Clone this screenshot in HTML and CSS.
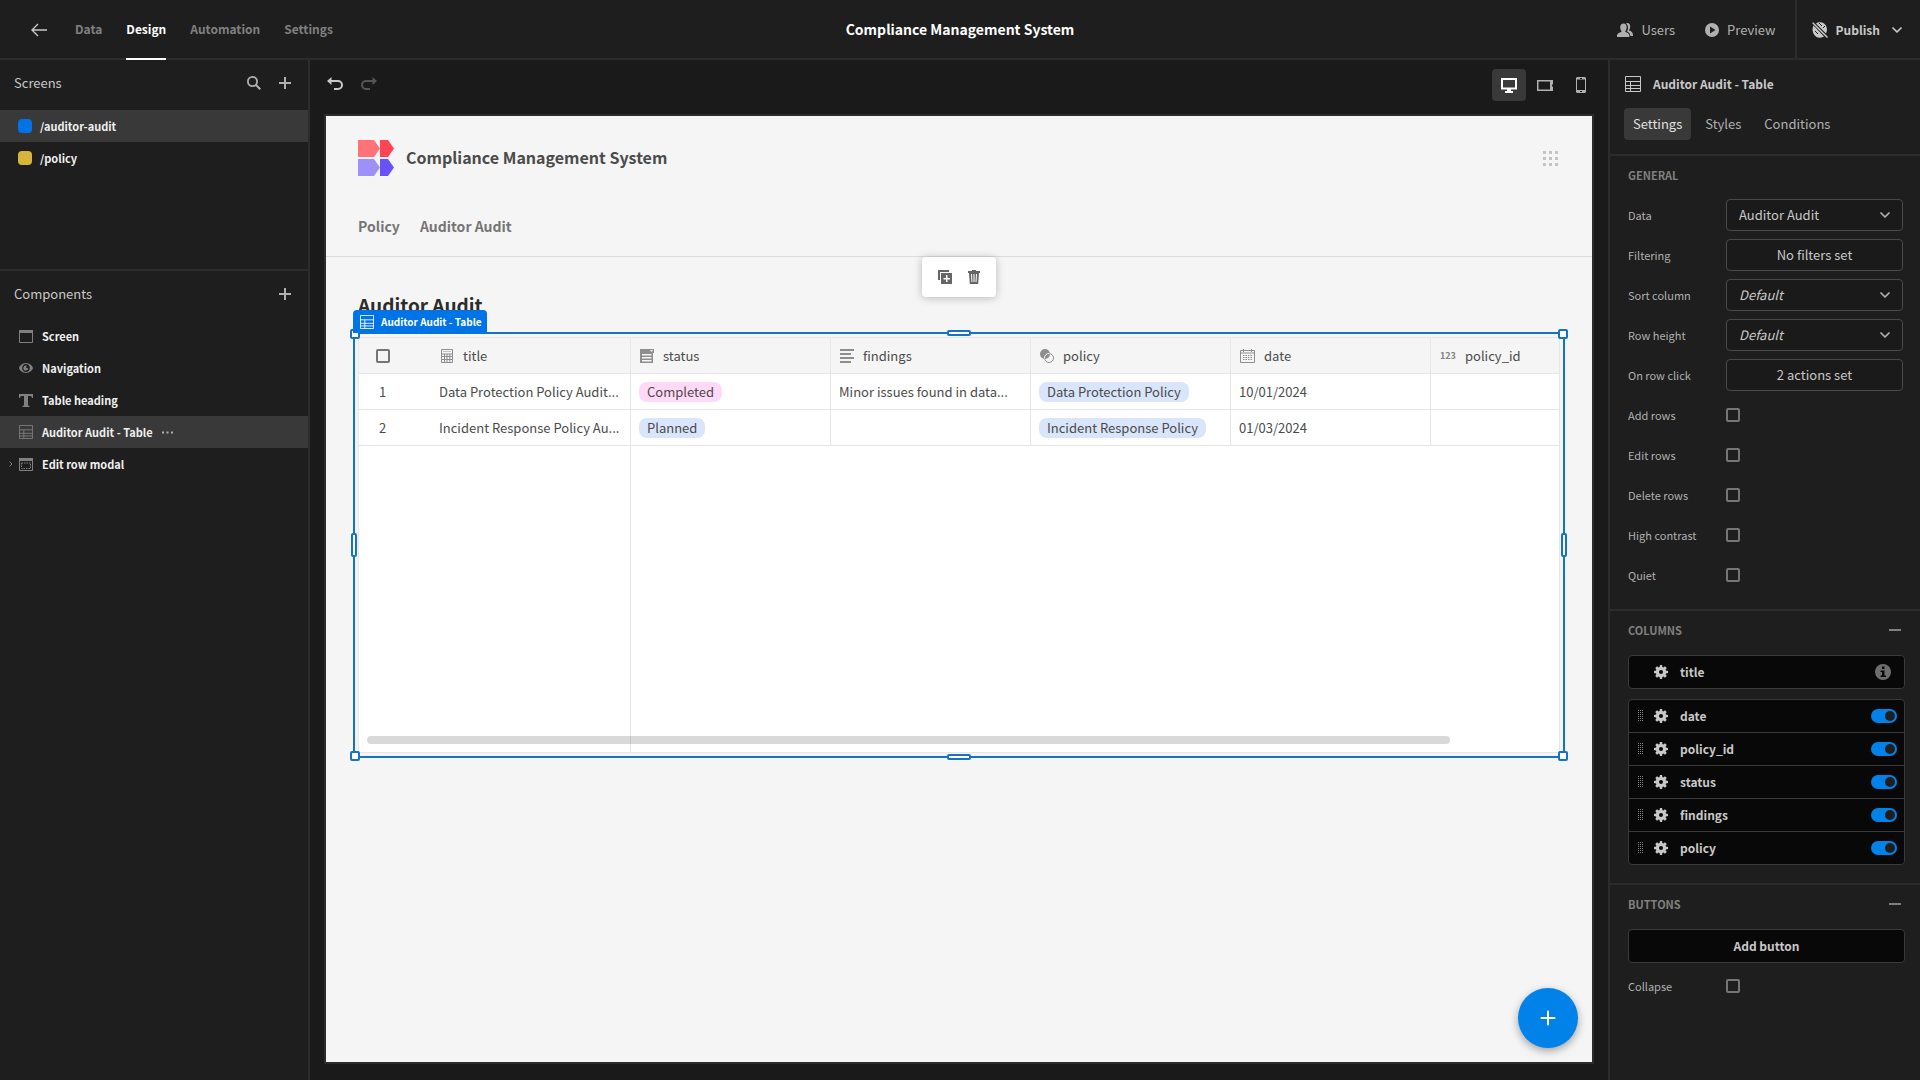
FILE: index.html
```html
<!DOCTYPE html>
<html lang="en">
<head>
    <meta charset="UTF-8">
    <meta name="viewport" content="width=device-width, initial-scale=1.0">
    <title>Compliance Management System</title>
    <link rel="stylesheet" href="styles.css">
</head>
<body>
    <!-- Shared icons -->
    <svg class="sprite" aria-hidden="true">
        <symbol id="i-table" viewBox="0 0 16 16">
            <path d="M.5.5h15v15H.5zM.5 5.5h15M.5 9.5h15M.5 12.5h15M5.5 5.5v10" fill="none" stroke="currentColor"/>
        </symbol>
        <symbol id="i-plus" viewBox="0 0 12 12">
            <path d="M6 0v12M0 6h12" fill="none" stroke="currentColor" stroke-width="2"/>
        </symbol>
        <symbol id="i-chevron" viewBox="0 0 10 6">
            <path d="M1 1l4 4 4-4" fill="none" stroke="currentColor" stroke-width="1.700" stroke-linecap="round" stroke-linejoin="round"/>
        </symbol>
        <symbol id="i-gear" viewBox="0 0 14 14">
            <path fill="currentColor" fill-rule="evenodd" d="M5.900 0h2.200l.3 2 .9.4L11 1.300l1.700 1.700L11.600 4.700l.4.9 2 .3v2.200l-2 .3-.4.9 1.100 1.700-1.700 1.700-1.700-1.100-.9.4-.3 2H5.900l-.3-2-.9-.4L3 12.700 1.300 11l1.100-1.700-.4-.9-2-.3V5.900l2-.3.4-.9L1.300 3 3 1.300l1.700 1.100.9-.4zM7 5a2 2 0 100 4 2 2 0 000-4z"/>
        </symbol>
        <symbol id="i-drag" viewBox="0 0 6 12">
            <path fill="currentColor" d="M0 0h1v1H0zM2 0h1v1H2zM4 0h1v1H4zM0 2h1v1H0zM2 2h1v1H2zM4 2h1v1H4zM0 4h1v1H0zM2 4h1v1H2zM4 4h1v1H4zM0 6h1v1H0zM2 6h1v1H2zM4 6h1v1H4zM0 8h1v1H0zM2 8h1v1H2zM4 8h1v1H4zM0 10h1v1H0zM2 10h1v1H2zM4 10h1v1H4z"/>
        </symbol>
    </svg>

    <header class="topbar">
        <nav class="topbar-nav">
            <a href="#" class="back" aria-label="Back">
                <svg width="16" height="14" viewBox="0 0 16 14"><path d="M7 1L1 7l6 6M1 7h15" fill="none" stroke="currentColor" stroke-width="1.400"/></svg>
            </a>
            <a href="#">Data</a>
            <a href="#" class="active">Design</a>
            <a href="#">Automation</a>
            <a href="#">Settings</a>
        </nav>
        <h1>Compliance Management System</h1>
        <div class="topbar-actions">
            <button class="top-button">
                <svg width="16" height="14" viewBox="0 0 16 14">
                    <path fill="currentColor" d="M6.500.5c2 0 3.200 1.500 3.200 3.700 0 1.500-.6 2.900-1.300 3.700v1c2 .6 4 1.500 4 3.600V14H0v-1.500c0-2.100 2.200-3 4.400-3.600v-1C3.700 7.100 3.200 5.700 3.200 4.200 3.200 2 4.500.5 6.500.5z"/>
                    <path fill="currentColor" d="M9 .4C9.500 0 10 0 10.400 0c1.800 0 2.800 1.500 2.800 3.400 0 1.500-.5 2.600-1.100 3.300v.9c2 .6 3.900 2 3.900 4.400v1h-2.600c-.1-2.600-1.900-3.800-3.500-4.400.7-1 1.100-2.400 1.100-4C11 2.700 10.200 1.200 9 .4z"/>
                </svg>
                Users
            </button>
            <button class="top-button">
                <svg width="14" height="14" viewBox="0 0 14 14"><path fill="currentColor" fill-rule="evenodd" d="M7 0a7 7 0 100 14A7 7 0 007 0zM5 3.500L10.500 7 5 10.500z"/></svg>
                Preview
            </button>
            <button class="top-button publish">
                <svg width="16" height="16" viewBox="0 0 16 16">
                    <path fill="currentColor" d="M4 1.500C6-.3 10-.3 12 1.500c3 2 3.800 6.500 2 10zM1.500 3.500l10.500 11C9 16 6.500 16 4.500 15 .8 12.500-.5 7.500 1.500 3.500z"/>
                    <path d="M.7.7l14.800 14.800" stroke="currentColor" stroke-width="1.500"/>
                    <path d="M7 1l3 3M11 6l2-2M3 9l3 3" stroke="#1e1e1e"/>
                </svg>
                Publish
                <svg class="chevron" width="10" height="6"><use href="#i-chevron"/></svg>
            </button>
        </div>
    </header>

    <div class="builder">
        <aside class="left-panel">
            <section class="screens">
                <div class="panel-title">
                    <h2>Screens</h2>
                    <button aria-label="Search screens">
                        <svg width="14" height="14" viewBox="0 0 14 14"><circle cx="5.500" cy="5.500" r="4.600" fill="none" stroke="currentColor" stroke-width="1.800"/><path d="M9 9l4.300 4.300" stroke="currentColor" stroke-width="2"/></svg>
                    </button>
                    <button aria-label="Add screen"><svg width="12" height="12"><use href="#i-plus"/></svg></button>
                </div>
                <a href="#" class="nav-item selected"><span class="swatch blue"></span>/auditor-audit</a>
                <a href="#" class="nav-item"><span class="swatch yellow"></span>/policy</a>
            </section>

            <section class="components">
                <div class="panel-title">
                    <h2>Components</h2>
                    <button aria-label="Add component"><svg width="12" height="12"><use href="#i-plus"/></svg></button>
                </div>
                <a href="#" class="nav-item">
                    <svg width="14" height="13" viewBox="0 0 14 13"><path d="M.5.5h13v12H.5z" fill="none" stroke="currentColor"/><path d="M0 0h14v3H0z" fill="currentColor"/></svg>
                    Screen
                </a>
                <a href="#" class="nav-item">
                    <svg width="14" height="12" viewBox="0 0 14 12"><path fill="currentColor" fill-rule="evenodd" d="M7 1c4 0 7 3.600 7 5s-3 5-7 5-7-3.600-7-5 3-5 7-5zm0 1C4.500 2 3.200 4 3.200 6S4.500 10 7 10s3.800-2 3.800-4S9.500 2 7 2zm0 1.500c.5 0 .7.100 1 .2-.5.300-.8.700-.8 1.200 0 .8.600 1.300 1.300 1.300.3 0 .6-.1.900-.3v.1A2.500 2.500 0 117 3.500z"/></svg>
                    Navigation
                </a>
                <a href="#" class="nav-item">
                    <svg width="14" height="13" viewBox="0 0 14 13"><path fill="currentColor" d="M0 0h14v4h-1c-.3-1.500-.8-2-2-2H9v8.500c0 1 .3 1.300 1.500 1.500v1h-7v-1C4.700 11.800 5 11.500 5 10.500V2H3C1.800 2 1.300 2.500 1 4H0z"/></svg>
                    Table heading
                </a>
                <a href="#" class="nav-item selected">
                    <svg width="14" height="14"><use href="#i-table"/></svg>
                    Auditor Audit - Table
                    <svg class="more" width="11" height="3" viewBox="0 0 11 3"><path fill="currentColor" d="M0 .5h2v2H0zM4.500.5h2v2h-2zM9 .5h2v2H9z"/></svg>
                </a>
                <a href="#" class="nav-item has-children">
                    <svg class="arrow" width="4" height="6" viewBox="0 0 4 6"><path d="M.5.5L3 3 .5 5.500" fill="none" stroke="currentColor"/></svg>
                    <svg width="14" height="13" viewBox="0 0 14 13"><path d="M.5.5h13v12H.5z" fill="none" stroke="currentColor"/><path d="M0 0h14v3H0z" fill="currentColor"/><path d="M2.500 5h9v5.500h-9z" fill="none" stroke="currentColor" stroke-dasharray="1.500 1"/></svg>
                    Edit row modal
                </a>
            </section>
        </aside>

        <main class="canvas">
            <div class="canvas-toolbar">
                <button class="undo" aria-label="Undo">
                    <svg width="16" height="13" viewBox="0 0 16 13"><path d="M4 4h7a4 4 0 010 8H7" fill="none" stroke="currentColor" stroke-width="2"/><path d="M0 4l4.500-4v8z" fill="currentColor"/></svg>
                </button>
                <button class="redo" aria-label="Redo" disabled>
                    <svg width="16" height="13" viewBox="0 0 16 13"><path d="M12 4H5a4 4 0 000 8h4" fill="none" stroke="currentColor" stroke-width="2"/><path d="M16 4l-4.500-4v8z" fill="currentColor"/></svg>
                </button>
                <div class="devices">
                    <button class="active" aria-label="Desktop">
                        <svg width="16" height="15" viewBox="0 0 16 15"><path d="M1 1h14v9.500H1z" fill="none" stroke="currentColor" stroke-width="2"/><path fill="currentColor" d="M6 11h4v2h2v2H4v-2h2z"/></svg>
                    </button>
                    <button aria-label="Tablet">
                        <svg width="16" height="13" viewBox="0 0 16 13"><path d="M0 1h16v4.500h-1v2h1V12H0zM1.500 2.500v8H13v-8z" fill="currentColor" fill-rule="evenodd"/></svg>
                    </button>
                    <button aria-label="Mobile">
                        <svg width="10" height="16" viewBox="0 0 10 16"><path d="M1 0h8l1 1v14l-1 1H1l-1-1V1zM1 2.500v10.500h8V2.500zM4 1v1h2V1zM4 14v1h2v-1z" fill="currentColor" fill-rule="evenodd"/></svg>
                    </button>
                </div>
            </div>

            <div class="preview">
                <div class="app-header">
                    <svg width="36" height="36" viewBox="0 0 36 36">
                        <path fill="#ff7378" d="M0 0h16l6 8.500L16 17H0z"/>
                        <path fill="#ff4553" d="M22 0h8l6 8.500L30 17h-8z"/>
                        <path fill="#9f8ff9" d="M0 19h16l6 8.500L16 36H0z"/>
                        <path fill="#6a51f5" d="M22 19h8l6 8.500L30 36h-8z"/>
                    </svg>
                    <span class="app-title">Compliance Management System</span>
                    <button class="apps" aria-label="Apps">
                        <svg width="15" height="15" viewBox="0 0 15 15"><path fill="currentColor" d="M0 0h3v3H0zM6 0h3v3H6zM12 0h3v3h-3zM0 6h3v3H0zM6 6h3v3H6zM12 6h3v3h-3zM0 12h3v3H0zM6 12h3v3H6zM12 12h3v3h-3z"/></svg>
                    </button>
                </div>
                <nav class="app-nav">
                    <a href="#">Policy</a>
                    <a href="#">Auditor Audit</a>
                </nav>

                <div class="app-body">
                    <h2>Auditor Audit</h2>
                    <div class="component">
                        <div class="grid-wrap">
                            <table class="grid">
                                <colgroup>
                                    <col class="gutter">
                                    <col><col><col><col><col><col>
                                </colgroup>
                                <thead>
                                    <tr>
                                        <th><input type="checkbox" class="checkbox" aria-label="Select all rows"></th>
                                        <th><span class="th">
                                            <svg width="14" height="14" viewBox="0 0 14 14"><path d="M1.500.5h11v13h-11zM1.500 5h11M1.500 7.500h11M1.500 10.500h11M4.500 5v8.500M7 5v8.500M9.800 5v8.500" fill="none" stroke="currentColor"/><path d="M3 2h8v1H3z" fill="currentColor" opacity=".5"/></svg>
                                            title</span></th>
                                        <th><span class="th">
                                            <svg width="14" height="14" viewBox="0 0 14 14"><path fill="currentColor" fill-rule="evenodd" d="M0 0h14v4h-1v10H0zM10 1l1.500 2L13 1zM2 5v1.500h9.500V5zM2 8v1.500h9.500V8zM2 11v1.500h9.500V11z"/></svg>
                                            status</span></th>
                                        <th><span class="th">
                                            <svg width="14" height="14" viewBox="0 0 14 14"><path fill="currentColor" d="M0 0h14v2H0zM0 4h11v2H0zM0 8h14v2H0zM0 12h11v2H0z"/></svg>
                                            findings</span></th>
                                        <th><span class="th">
                                            <svg width="14" height="14" viewBox="0 0 14 14"><circle cx="5" cy="5" r="5" fill="currentColor"/><circle cx="9" cy="9" r="4.500" fill="none" stroke="currentColor"/><path d="M4.500 9.500A4.500 4.500 0 019.500 4.500" fill="none" stroke="#f5f5f5"/></svg>
                                            policy</span></th>
                                        <th><span class="th">
                                            <svg width="15" height="14" viewBox="0 0 15 14"><path d="M.5 1.500h14v12H.5zM.5 4h14M3.500 0v3M11.500 0v3" fill="none" stroke="currentColor"/><path d="M3 6.500h9M3 8.500h9M3 10.500h9" fill="none" stroke="currentColor" stroke-dasharray="1.500 1"/></svg>
                                            date</span></th>
                                        <th><span class="th"><span class="num">123</span>policy_id</span></th>
                                    </tr>
                                </thead>
                                <tbody>
                                    <tr>
                                        <td class="row-number">1</td>
                                        <td>Data Protection Policy Audit...</td>
                                        <td><span class="badge pink">Completed</span></td>
                                        <td>Minor issues found in data...</td>
                                        <td><span class="badge">Data Protection Policy</span></td>
                                        <td>10/01/2024</td>
                                        <td></td>
                                    </tr>
                                    <tr>
                                        <td class="row-number">2</td>
                                        <td>Incident Response Policy Au...</td>
                                        <td><span class="badge">Planned</span></td>
                                        <td></td>
                                        <td><span class="badge">Incident Response Policy</span></td>
                                        <td>01/03/2024</td>
                                        <td></td>
                                    </tr>
                                </tbody>
                            </table>
                            <div class="scrollbar"></div>
                        </div>

                        <!-- Selection overlay -->
                        <div class="outline">
                            <i class="handle corner nw"></i>
                            <i class="handle corner ne"></i>
                            <i class="handle corner sw"></i>
                            <i class="handle corner se"></i>
                            <i class="handle flat top"></i>
                            <i class="handle flat bottom"></i>
                            <i class="handle tall left"></i>
                            <i class="handle tall right"></i>
                        </div>
                        <div class="component-label">
                            <svg width="14" height="14"><use href="#i-table"/></svg>
                            Auditor Audit - Table
                        </div>
                        <div class="component-toolbar">
                            <button aria-label="Duplicate">
                                <svg width="14" height="14" viewBox="0 0 14 14"><path fill="currentColor" d="M0 0h11v2H2v8H0z"/><path fill="currentColor" fill-rule="evenodd" d="M3 3h11v11H3zM8 5v3H5.500v1.500H8V12h1.500V9.500H12V8H9.500V5z"/></svg>
                            </button>
                            <button aria-label="Delete">
                                <svg width="12" height="14" viewBox="0 0 12 14"><path fill="currentColor" fill-rule="evenodd" d="M4 0h4v1h4v2h-1l-.8 11H1.800L1 3H0V1h4zM3 4l.5 8h1L4 4zM5.500 4v8h1V4zM8 4l-.5 8h1L9 4z"/></svg>
                            </button>
                        </div>
                    </div>
                </div>

                <button class="fab" aria-label="Add row">
                    <svg width="16" height="16" viewBox="0 0 16 16"><path d="M8 1.500v13M1.500 8h13" stroke="currentColor" stroke-width="2" stroke-linecap="round"/></svg>
                </button>
            </div>
        </main>

        <aside class="right-panel">
            <div class="component-title">
                <svg width="16" height="16"><use href="#i-table"/></svg>
                <h2>Auditor Audit - Table</h2>
            </div>
            <div class="tabs">
                <button class="active">Settings</button>
                <button>Styles</button>
                <button>Conditions</button>
            </div>

            <section class="settings general">
                <div class="section-head"><h3>General</h3></div>
                <div class="setting">
                    <label for="data">Data</label>
                    <div class="picker">
                        <select id="data"><option>Auditor Audit</option></select>
                        <svg width="10" height="6"><use href="#i-chevron"/></svg>
                    </div>
                </div>
                <div class="setting">
                    <label for="filtering">Filtering</label>
                    <button id="filtering" class="action">No filters set</button>
                </div>
                <div class="setting">
                    <label for="sort">Sort column</label>
                    <div class="picker">
                        <select id="sort" class="placeholder"><option>Default</option></select>
                        <svg width="10" height="6"><use href="#i-chevron"/></svg>
                    </div>
                </div>
                <div class="setting">
                    <label for="row-height">Row height</label>
                    <div class="picker">
                        <select id="row-height" class="placeholder"><option>Default</option></select>
                        <svg width="10" height="6"><use href="#i-chevron"/></svg>
                    </div>
                </div>
                <div class="setting">
                    <label for="row-click">On row click</label>
                    <button id="row-click" class="action">2 actions set</button>
                </div>
                <div class="setting">
                    <label for="add-rows">Add rows</label>
                    <input type="checkbox" class="checkbox" id="add-rows">
                </div>
                <div class="setting">
                    <label for="edit-rows">Edit rows</label>
                    <input type="checkbox" class="checkbox" id="edit-rows">
                </div>
                <div class="setting">
                    <label for="delete-rows">Delete rows</label>
                    <input type="checkbox" class="checkbox" id="delete-rows">
                </div>
                <div class="setting">
                    <label for="contrast">High contrast</label>
                    <input type="checkbox" class="checkbox" id="contrast">
                </div>
                <div class="setting">
                    <label for="quiet">Quiet</label>
                    <input type="checkbox" class="checkbox" id="quiet">
                </div>
            </section>

            <section class="settings">
                <div class="section-head">
                    <h3>Columns</h3>
                    <button aria-label="Collapse columns"></button>
                </div>
                <div class="columns-list primary">
                    <div class="column-row">
                        <svg class="gear" width="14" height="14"><use href="#i-gear"/></svg>
                        <span>title</span>
                        <svg class="info" width="16" height="16" viewBox="0 0 16 16"><circle cx="8" cy="8" r="8" fill="currentColor"/><path fill="#080808" d="M7 2.500h2.500V5H7zM5.500 6.500h4v5H11V13H5.500v-1.500H7V8H5.500z"/></svg>
                    </div>
                </div>
                <div class="columns-list">
                    <div class="column-row">
                        <svg class="drag" width="6" height="12"><use href="#i-drag"/></svg>
                        <svg class="gear" width="14" height="14"><use href="#i-gear"/></svg>
                        <label for="col-date">date</label>
                        <input type="checkbox" class="switch" id="col-date" checked>
                    </div>
                    <div class="column-row">
                        <svg class="drag" width="6" height="12"><use href="#i-drag"/></svg>
                        <svg class="gear" width="14" height="14"><use href="#i-gear"/></svg>
                        <label for="col-policy-id">policy_id</label>
                        <input type="checkbox" class="switch" id="col-policy-id" checked>
                    </div>
                    <div class="column-row">
                        <svg class="drag" width="6" height="12"><use href="#i-drag"/></svg>
                        <svg class="gear" width="14" height="14"><use href="#i-gear"/></svg>
                        <label for="col-status">status</label>
                        <input type="checkbox" class="switch" id="col-status" checked>
                    </div>
                    <div class="column-row">
                        <svg class="drag" width="6" height="12"><use href="#i-drag"/></svg>
                        <svg class="gear" width="14" height="14"><use href="#i-gear"/></svg>
                        <label for="col-findings">findings</label>
                        <input type="checkbox" class="switch" id="col-findings" checked>
                    </div>
                    <div class="column-row">
                        <svg class="drag" width="6" height="12"><use href="#i-drag"/></svg>
                        <svg class="gear" width="14" height="14"><use href="#i-gear"/></svg>
                        <label for="col-policy">policy</label>
                        <input type="checkbox" class="switch" id="col-policy" checked>
                    </div>
                </div>
            </section>

            <section class="settings">
                <div class="section-head">
                    <h3>Buttons</h3>
                    <button aria-label="Collapse buttons"></button>
                </div>
                <button class="add-button">Add button</button>
                <div class="setting">
                    <label for="collapse">Collapse</label>
                    <input type="checkbox" class="checkbox" id="collapse">
                </div>
            </section>
        </aside>
    </div>
</body>
</html>
```

FILE: styles.css
```css
:root {
    --bg: #1e1e1e;
    --bg-dark: #1a1a1a;
    --bg-card: #080808;
    --bg-selected: #393939;
    --line: #2c2c2c;
    --control-line: #4a4a4a;
    --text: #c8c8c8;
    --text-dim: #b0b0b0;
    --text-muted: #808080;
    --blue: #0073e6;
    --outline: #1473c8;
    --grid-line: #e6e6e6;
}

* {
    box-sizing: border-box;
}

body {
    margin: 0;
    height: 100vh;
    display: flex;
    flex-direction: column;
    background: var(--bg);
    color: var(--text);
    font-family: "Noto Sans CJK SC", "Noto Sans", sans-serif;
    font-size: 13px;
    line-height: 20px;
    overflow: hidden;
}

h1, h2, h3 {
    margin: 0;
    font-weight: 400;
    font-size: 13px;
}

a {
    color: inherit;
    text-decoration: none;
}

button, select {
    font: inherit;
    color: inherit;
    cursor: pointer;
}

button {
    display: flex;
    align-items: center;
    justify-content: center;
    padding: 0;
    border: none;
    background: none;
}

svg {
    flex: none;
    display: block;
}

.sprite {
    position: absolute;
    width: 0;
    height: 0;
}

/* Top bar */
.topbar {
    flex: none;
    display: grid;
    grid-template-columns: 1fr auto 1fr;
    height: 60px;
    border-bottom: 2px solid var(--line);
}

.topbar h1 {
    align-self: center;
    padding-bottom: 2px;
    color: #fff;
    font-size: 14px;
    font-weight: 700;
}

.topbar-nav {
    display: flex;
    gap: 24px;
    padding-left: 31px;
    color: var(--text-muted);
    font-size: 12px;
    font-weight: 700;
}

.topbar-nav a {
    display: flex;
    align-items: center;
    height: 60px;
    border-bottom: 2px solid transparent;
}

.topbar-nav .back {
    margin-right: 4px;
    padding-top: 2px;
    color: var(--text);
}

.topbar-nav .active {
    color: #fff;
    border-color: #fff;
}

.topbar-actions {
    display: flex;
    justify-content: flex-end;
    gap: 30px;
}

.top-button {
    gap: 8px;
    color: var(--text-dim);
}

.top-button.publish {
    margin-left: -11px;
    padding: 0 18px 0 15px;
    border-left: 2px solid var(--line);
    color: var(--text);
    font-size: 12px;
    font-weight: 700;
}

.publish .chevron {
    margin-left: 4px;
}

.builder {
    flex: 1;
    min-height: 0;
    display: grid;
    grid-template-columns: 310px 1fr 312px;
}

/* Left panel */
.left-panel {
    border-right: 2px solid var(--line);
}

.screens {
    height: 211px;
    border-bottom: 2px solid var(--line);
}

.panel-title {
    display: flex;
    align-items: center;
    gap: 18px;
    height: 50px;
    padding: 0 17px 4px 14px;
    color: var(--text-dim);
}

.panel-title h2 {
    flex: 1;
    color: var(--text);
}

.components .panel-title {
    height: 49px;
    padding-bottom: 3px;
}

.nav-item {
    display: flex;
    align-items: center;
    gap: 9px;
    height: 32px;
    padding-left: 19px;
    color: #f0f0f0;
    font-size: 11px;
    font-weight: 700;
}

.nav-item svg {
    color: var(--text-muted);
}

.nav-item.selected {
    background: var(--bg-selected);
}

.nav-item.selected .more {
    color: var(--text-dim);
}

.nav-item.has-children {
    gap: 6px;
    padding-left: 9px;
}

.nav-item.has-children svg:last-of-type {
    margin-right: 3px;
}

.swatch {
    width: 14px;
    height: 14px;
    border-radius: 4px;
}

.swatch.blue {
    background: var(--blue);
}

.swatch.yellow {
    background: #d9b43a;
}

.screens .nav-item {
    gap: 8px;
    padding-left: 18px;
}

/* Canvas */
.canvas {
    min-width: 0;
    display: flex;
    flex-direction: column;
    padding: 0 14px 16px;
    background: var(--bg-dark);
}

.canvas-toolbar {
    flex: none;
    display: flex;
    align-items: center;
    gap: 18px;
    height: 54px;
    padding-left: 3px;
    padding-bottom: 4px;
}

.undo, .redo {
    padding-bottom: 4px;
}

.redo {
    color: #555;
}

.devices {
    display: flex;
    gap: 2px;
    margin-left: auto;
    margin-right: -4px;
    color: var(--text-dim);
}

.devices button {
    width: 34px;
    height: 32px;
    border-radius: 4px;
}

.devices .active {
    background: var(--bg-selected);
    color: #fff;
}

.preview {
    position: relative;
    flex: 1;
    border: 2px solid var(--line);
    background: #f5f5f5;
    color: #4b4b4b;
}

.app-header {
    display: flex;
    align-items: center;
    gap: 12px;
    padding: 24px 34px 0 32px;
}

.app-title {
    flex: 1;
    padding-bottom: 2px;
    font-size: 16px;
    font-weight: 700;
}

.apps {
    color: #c4c4c4;
}

.app-nav {
    display: flex;
    gap: 20px;
    padding: 40px 32px 20px;
    border-bottom: 1px solid #dcdcdc;
    color: #757575;
    font-size: 14px;
    font-weight: 700;
}

.app-body {
    padding: 32px;
}

.app-body h2 {
    height: 48px;
    color: #2c2c2c;
    font-size: 19px;
    font-weight: 700;
    line-height: 32px;
}

/* Data grid */
.component {
    position: relative;
}

.grid-wrap {
    position: relative;
    height: 416px;
    border: 1px solid var(--grid-line);
    overflow: hidden;
    background: linear-gradient(var(--grid-line), var(--grid-line)) 271px 0 / 1px 100% no-repeat #fff;
}

.grid {
    width: 1272px;
    table-layout: fixed;
    border-collapse: separate;
    border-spacing: 0;
}

.grid .gutter {
    width: 72px;
}

.grid th, .grid td {
    height: 36px;
    padding: 0 8px;
    border-right: 1px solid var(--grid-line);
    border-bottom: 1px solid var(--grid-line);
    text-align: left;
    white-space: nowrap;
    font-weight: 400;
}

.grid th {
    background: #f5f5f5;
}

.grid th:first-child, .grid td:first-child {
    padding-left: 17px;
    border-right: none;
}

.grid .row-number:first-child {
    padding-left: 20px;
}

.th {
    display: flex;
    align-items: center;
    gap: 9px;
    padding-left: 1px;
}

.th svg {
    color: #8e8e8e;
}

.num {
    color: #808080;
    font-size: 9px;
    font-weight: 700;
}

.badge {
    display: inline-block;
    padding: 0 8px;
    border-radius: 8px;
    background: #d9e5fa;
    vertical-align: middle;
}

.badge.pink {
    background: #ffd9f7;
}

.scrollbar {
    position: absolute;
    left: 8px;
    right: 109px;
    bottom: 8px;
    height: 8px;
    border-radius: 4px;
    background: rgba(0, 0, 0, 0.15);
}

/* Selection overlay */
.outline {
    position: absolute;
    inset: -5px;
    border: 2px solid var(--outline);
    pointer-events: none;
}

.handle {
    position: absolute;
    border: 2px solid var(--outline);
    border-radius: 2px;
    background: #fff;
}

.corner {
    width: 10px;
    height: 10px;
}

.flat {
    left: 50%;
    width: 24px;
    height: 6px;
    margin-left: -12px;
}

.tall {
    top: 50%;
    width: 6px;
    height: 24px;
    margin-top: -12px;
}

.nw, .ne {
    top: -5px;
}

.sw, .se {
    bottom: -5px;
}

.nw, .sw {
    left: -5px;
}

.ne, .se {
    right: -5px;
}

.top {
    top: -4px;
}

.bottom {
    bottom: -4px;
}

.left {
    left: -4px;
}

.right {
    right: -4px;
}

.component-label {
    position: absolute;
    bottom: 100%;
    left: -5px;
    display: flex;
    align-items: center;
    gap: 7px;
    height: 23px;
    margin-bottom: 4px;
    padding: 0 5px 0 7px;
    border-radius: 4px 4px 0 0;
    background: var(--blue);
    color: #fff;
    font-size: 10px;
    font-weight: 700;
}

.component-toolbar {
    position: absolute;
    top: -80px;
    left: 50%;
    display: flex;
    align-items: center;
    gap: 16px;
    height: 40px;
    padding: 0 16px;
    border-radius: 4px;
    background: #fff;
    box-shadow: 0 1px 8px rgba(0, 0, 0, 0.25);
    color: #666;
    transform: translateX(-50%);
}

.fab {
    position: absolute;
    right: 14px;
    bottom: 14px;
    width: 60px;
    height: 60px;
    border-radius: 50%;
    background: #0082e8;
    box-shadow: 0 3px 8px rgba(0, 0, 0, 0.35);
    color: #fff;
}

/* Right panel */
.right-panel {
    border-left: 2px solid var(--line);
}

.component-title {
    display: flex;
    align-items: center;
    gap: 12px;
    height: 48px;
    padding-left: 15px;
}

.component-title h2 {
    font-size: 12px;
    font-weight: 700;
}

.tabs {
    display: flex;
    gap: 5px;
    height: 48px;
    padding: 0 14px 14px;
    border-bottom: 2px solid var(--line);
    color: var(--text-dim);
}

.tabs button {
    padding: 0 9px;
    border-radius: 4px;
}

.tabs .active {
    background: var(--bg-selected);
    color: #e0e0e0;
}

.settings {
    padding: 0 15px 18px 18px;
    border-bottom: 2px solid var(--line);
}

.settings:last-child {
    border-bottom: none;
}

.settings.general {
    padding-bottom: 14px;
}

.section-head {
    display: flex;
    align-items: center;
    justify-content: space-between;
    height: 37px;
    margin-bottom: 7px;
    padding-right: 4px;
}

.section-head h3 {
    color: var(--text-muted);
    font-size: 11px;
    font-weight: 700;
    text-transform: uppercase;
}

.section-head button {
    width: 12px;
    height: 2px;
    background: var(--text-muted);
}

.general .section-head {
    margin-bottom: 2px;
}

.setting {
    display: grid;
    grid-template-columns: 98px 1fr;
    align-items: center;
    height: 40px;
    padding-right: 2px;
}

.setting label {
    color: var(--text-dim);
    font-size: 11px;
}

.picker {
    position: relative;
}

.picker svg {
    position: absolute;
    top: 13px;
    right: 13px;
    color: var(--text-dim);
    pointer-events: none;
}

.picker select, .action {
    width: 100%;
    height: 32px;
    border: 1px solid var(--control-line);
    border-radius: 4px;
    background: var(--bg-dark);
}

.picker select {
    padding: 0 12px;
    appearance: none;
}

.picker .placeholder {
    font-style: italic;
}

.checkbox {
    display: block;
    width: 14px;
    height: 14px;
    margin: 0;
    border: 2px solid #757575;
    border-radius: 2px;
    appearance: none;
}

.columns-list {
    border: 1px solid #3a3a3a;
    border-radius: 4px;
    background: var(--bg-card);
}

.columns-list.primary {
    margin-bottom: 10px;
}

.column-row {
    display: flex;
    align-items: center;
    height: 33px;
    padding: 0 7px 0 9px;
    border-bottom: 1px solid #3a3a3a;
    font-size: 12px;
    font-weight: 700;
}

.column-row:last-child {
    height: 32px;
    border-bottom: none;
}

.column-row .gear {
    margin-right: 12px;
}

.column-row .drag {
    margin-right: 10px;
    color: var(--text-muted);
}

.column-row label, .column-row span {
    flex: 1;
}

.primary .column-row {
    padding: 0 13px 0 25px;
}

.info {
    color: #6e6e6e;
}

.switch {
    display: flex;
    align-items: center;
    justify-content: flex-end;
    width: 26px;
    height: 14px;
    margin: 0;
    padding: 2px;
    border-radius: 7px;
    background: #0082e8;
    appearance: none;
}

.switch::before {
    content: "";
    width: 10px;
    height: 10px;
    border-radius: 50%;
    background: var(--bg);
}

.add-button {
    width: 100%;
    height: 34px;
    margin-bottom: 3px;
    border: 1px solid #3a3a3a;
    border-radius: 4px;
    background: var(--bg-card);
    font-size: 12px;
    font-weight: 700;
}
```
